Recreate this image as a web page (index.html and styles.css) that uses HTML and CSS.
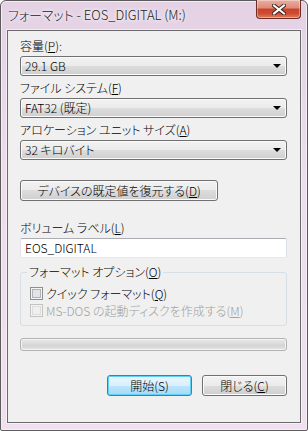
FILE: index.html
```html
<!DOCTYPE html>
<html lang="ja">
<head>
    <meta charset="UTF-8">
    <meta name="viewport" content="width=device-width, initial-scale=1.0">
    <title>フォーマット - EOS_DIGITAL (M:)</title>
    <link rel="stylesheet" href="styles.css">
</head>
<body>
    <div class="window">
        <div class="titlebar">
            <span class="title">フォーマット - EOS_DIGITAL (M:)</span>
            <div class="close">
                <svg xmlns="http://www.w3.org/2000/svg" viewBox="0 0 14 11" width="14" height="11"><path d="M2 1.5 L12 9.5 M12 1.5 L2 9.5" stroke="#3b2320" stroke-width="4" stroke-linecap="square"></path><path d="M2 1.5 L12 9.5 M12 1.5 L2 9.5" stroke="#ffffff" stroke-width="2" stroke-linecap="square"></path></svg>
            </div>
        </div>
        <div class="client">
            <div class="field">
                <div class="label">容量(<u>P</u>):</div>
                <div class="combo"><span>29.1 GB</span><span class="arrow"></span></div>
            </div>
            <div class="field">
                <div class="label">ファイル システム(<u>F</u>)</div>
                <div class="combo"><span>FAT32 (既定)</span><span class="arrow"></span></div>
            </div>
            <div class="field">
                <div class="label">アロケーション ユニット サイズ(<u>A</u>)</div>
                <div class="combo"><span>32 キロバイト</span><span class="arrow"></span></div>
            </div>
            <div class="btn restore">デバイスの既定値を復元する(<u>D</u>)</div>
            <div class="field volume">
                <div class="label">ボリューム ラベル(<u>L</u>)</div>
                <div class="textbox">EOS_DIGITAL</div>
            </div>
            <fieldset class="group">
                <legend>フォーマット オプション(<u>O</u>)</legend>
                <div class="check"><span class="box"></span>クイック フォーマット(<u>Q</u>)</div>
                <div class="check disabled"><span class="box"></span>MS-DOS の起動ディスクを作成する(<u>M</u>)</div>
            </fieldset>
            <div class="progress"></div>
            <div class="actions">
                <div class="btn default">開始(S)</div>
                <div class="btn">閉じる(<u>C</u>)</div>
            </div>
        </div>
    </div>
</body>
</html>
```

FILE: styles.css
```css
body {
    margin: 0;
    font-family: "Noto Sans CJK JP", sans-serif;
    font-size: 12px;
    font-weight: 300;
    font-feature-settings: "palt";
    color: #000;
    background-color: #ffffff;
}
.window {
    width: 308px;
    height: 431px;
    box-sizing: border-box;
    display: flex;
    flex-direction: column;
    padding: 0 6px 7px 6px;
    border: 1px solid #5b5b5b;
    border-radius: 6px 6px 2px 2px;
    background: linear-gradient(#e4d2e4, #ecdcec 40%, #f0e0ef);
    box-shadow: inset 0 0 0 1px #f6eef6;
}
.titlebar {
    height: 29px;
    display: flex;
    justify-content: space-between;
    align-items: flex-start;
}
.title {
    padding: 6px 0 0 1px;
    font-size: 13px;
    line-height: 15px;
    color: #1a1a1a;
    text-shadow: 0 0 6px #fff, 0 0 3px #fff;
}
.close {
    width: 45px;
    height: 19px;
    margin-top: -1px;
    box-sizing: border-box;
    border: 1px solid #6b2e26;
    border-top: none;
    border-radius: 0 0 4px 4px;
    background: linear-gradient(#eab0a3 0%, #de8976 45%, #c8432b 50%, #cf4b30 75%, #e27e5e 100%);
    box-shadow: inset 0 0 0 1px rgba(255, 255, 255, 0.35);
    display: flex;
    justify-content: center;
    align-items: center;
}
.client {
    flex: 1;
    display: flex;
    flex-direction: column;
    padding: 8px 13px 0 12px;
    border: 1px solid #6a6a6a;
    background-color: #f0f0f0;
    box-shadow: 0 0 0 1px rgba(255, 255, 255, 0.55);
}
.field {
    margin-bottom: 5px;
}
.label {
    height: 14px;
    line-height: 14px;
    margin-bottom: 3px;
    white-space: nowrap;
}
.combo {
    height: 20px;
    box-sizing: border-box;
    display: flex;
    justify-content: space-between;
    align-items: center;
    padding: 0 4px 0 4px;
    border: 1px solid #707070;
    border-radius: 3px;
    background: linear-gradient(#f2f2f2 0%, #ebebeb 50%, #dddddd 50%, #cfcfcf 100%);
    box-shadow: inset 0 0 0 1px #fafafa;
    line-height: 16px;
}
.arrow {
    width: 0;
    height: 0;
    margin-right: 1px;
    border-left: 4px solid transparent;
    border-right: 4px solid transparent;
    border-top: 4px solid #000;
}
.btn {
    height: 21px;
    box-sizing: border-box;
    display: flex;
    justify-content: center;
    align-items: center;
    border: 1px solid #707070;
    border-radius: 3px;
    background: linear-gradient(#f2f2f2 0%, #ebebeb 50%, #dddddd 50%, #cfcfcf 100%);
    box-shadow: inset 0 0 0 1px #fafafa;
    line-height: 16px;
    white-space: nowrap;
}
.restore {
    width: 198px;
    margin-top: 15px;
}
.volume {
    margin-top: 20px;
}
.textbox {
    height: 20px;
    box-sizing: border-box;
    padding: 0 4px;
    line-height: 18px;
    background-color: #ffffff;
    border: 1px solid #e3e9ef;
    border-top-color: #abadb3;
    border-left-color: #e2e3ea;
    border-right-color: #dbdfe6;
    border-radius: 2px;
}
.group {
    margin: 2px 0 0 0;
    padding: 6px 9px 6px 9px;
    border: 1px solid #d5dfe5;
    border-radius: 3px;
}
.group legend {
    padding: 0 2px;
    margin-left: -3px;
    line-height: 14px;
}
.check {
    display: flex;
    align-items: center;
    height: 17px;
    white-space: nowrap;
}
.check .box {
    width: 13px;
    height: 13px;
    box-sizing: border-box;
    margin-right: 3px;
    border: 1px solid #8e8f8f;
    background: #ffffff;
    box-shadow: inset 0 0 0 1px #f4f4f4, inset 0 0 0 2px #aeb3b9, inset 0 0 0 6px #e1e3e6;
}
.check.disabled {
    color: #a0a0a0;
}
.check.disabled .box {
    border-color: #c3c3c3;
    box-shadow: inset 0 0 0 1px #f4f4f4, inset 0 0 0 2px #dcdcdc, inset 0 0 0 6px #f0f0f0;
}
.progress {
    height: 13px;
    margin-top: 12px;
    box-sizing: border-box;
    border: 1px solid #b2b2b2;
    border-radius: 3px;
    background: linear-gradient(#e8e8e8 0%, #dcdcdc 40%, #d4d4d4 60%, #e6e6e6 100%);
    box-shadow: inset 0 0 0 1px #f4f4f4;
}
.actions {
    display: flex;
    justify-content: flex-end;
    gap: 10px;
    margin-top: 24px;
}
.actions .btn {
    width: 85px;
}
.btn.default {
    border-color: #3c7fb1;
    background: linear-gradient(#eaf6fd 0%, #d9f0fc 50%, #bee6fd 50%, #a7d9f5 100%);
    box-shadow: inset 0 0 0 1px #5fd0f7;
}
```
